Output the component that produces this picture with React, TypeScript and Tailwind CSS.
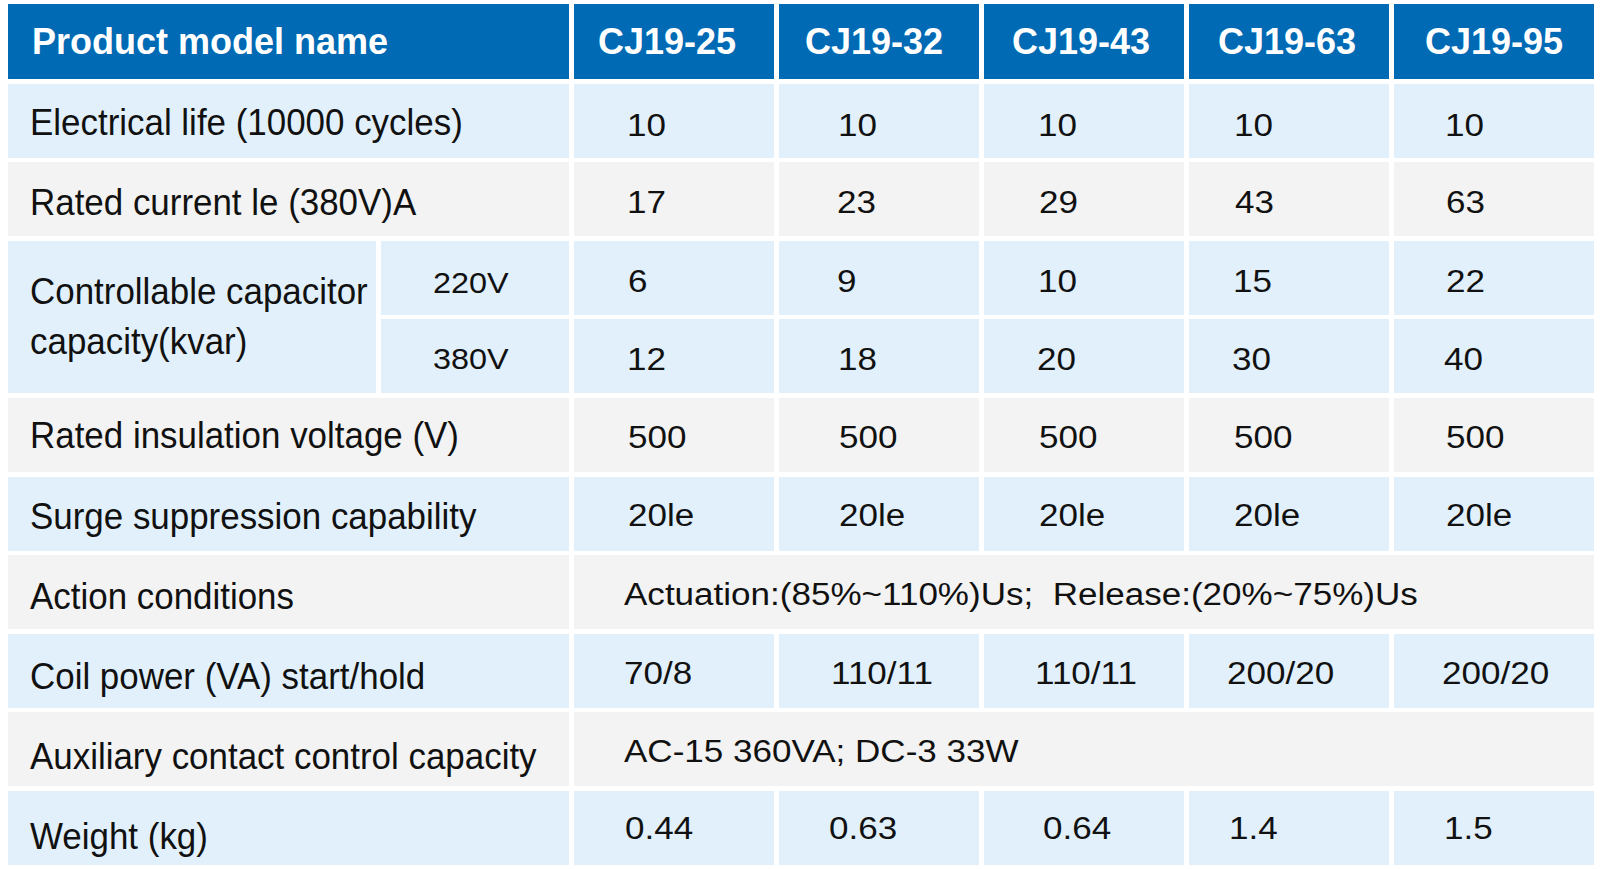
import type { ReactNode } from 'react';

const BLUE = 'bg-[#e1f0fa]';
const GRAY = 'bg-[#f3f3f3]';

function Head({ children, span = '', left = false, dx = '' }: { children: ReactNode; span?: string; left?: boolean; dx?: string }) {
  return (
    <div className={`flex items-center bg-[#006ab5] ${left ? 'justify-start pl-[24px]' : 'justify-center'} ${span}`}>
      <span className={`text-[36px] font-bold text-white ${dx}`}>{children}</span>
    </div>
  );
}

function Label({ children, tone, dy = '' }: { children: ReactNode; tone: string; dy?: string }) {
  return (
    <div className={`col-span-2 flex items-center pl-[22px] ${tone}`}>
      <span className={`inline-block origin-left scale-x-[0.97] whitespace-nowrap text-[36px] text-[#111] ${dy}`}>{children}</span>
    </div>
  );
}

function Value({ children, tone, pad, dy = '', span = '' }: { children: ReactNode; tone: string; pad: string; dy?: string; span?: string }) {
  return (
    <div className={`flex items-center ${tone} ${pad} ${span}`}>
      <span className={`inline-block origin-left scale-x-[1.13] whitespace-pre text-[31px] text-[#111] ${dy}`}>{children}</span>
    </div>
  );
}

export default function App() {
  return (
    <div className="min-h-screen bg-white font-['Liberation_Sans',Arial,sans-serif]">
      <div className="grid grid-cols-[368px_188px_repeat(5,200px)] grid-rows-[75px_repeat(10,74px)] gap-x-[5px] gap-y-[4.6px] pl-[8px] pt-[4px]">
        {/* header */}
        <Head span="col-span-2" left>Product model name</Head>
        <Head dx="-translate-x-[7px]">CJ19-25</Head>
        <Head dx="-translate-x-[5px]">CJ19-32</Head>
        <Head dx="-translate-x-[3px]">CJ19-43</Head>
        <Head dx="-translate-x-[2px]">CJ19-63</Head>
        <Head>CJ19-95</Head>

        {/* electrical life */}
        <Label tone={BLUE} dy="translate-y-[1.5px]">Electrical life (10000 cycles)</Label>
        <Value tone={BLUE} pad="pl-[53px]" dy="translate-y-[5.5px]">10</Value>
        <Value tone={BLUE} pad="pl-[59px]" dy="translate-y-[5.5px]">10</Value>
        <Value tone={BLUE} pad="pl-[54px]" dy="translate-y-[5.5px]">10</Value>
        <Value tone={BLUE} pad="pl-[45px]" dy="translate-y-[5.5px]">10</Value>
        <Value tone={BLUE} pad="pl-[51px]" dy="translate-y-[5.5px]">10</Value>

        {/* rated current */}
        <Label tone={GRAY} dy="translate-y-[4px]">Rated current le (380V)A</Label>
        <Value tone={GRAY} pad="pl-[53px]" dy="translate-y-[4px]">17</Value>
        <Value tone={GRAY} pad="pl-[58px]" dy="translate-y-[4px]">23</Value>
        <Value tone={GRAY} pad="pl-[55px]" dy="translate-y-[4px]">29</Value>
        <Value tone={GRAY} pad="pl-[46px]" dy="translate-y-[4px]">43</Value>
        <Value tone={GRAY} pad="pl-[52px]" dy="translate-y-[4px]">63</Value>

        {/* capacitor capacity, two sub rows */}
        <div className={`row-span-2 flex items-center pl-[22px] ${BLUE}`}>
          <span className="inline-block origin-left scale-x-[0.97] whitespace-nowrap text-[36px] leading-[50px] text-[#111]">
            Controllable capacitor
            <br />
            capacity(kvar)
          </span>
        </div>
        <div className={`flex items-center pl-[52px] ${BLUE}`}>
          <span className="inline-block origin-left translate-y-[5px] scale-x-[1.08] text-[30px] text-[#111]">220V</span>
        </div>
        <Value tone={BLUE} pad="pl-[54px]" dy="translate-y-[3.5px]">6</Value>
        <Value tone={BLUE} pad="pl-[58px]" dy="translate-y-[3.5px]">9</Value>
        <Value tone={BLUE} pad="pl-[54px]" dy="translate-y-[3.5px]">10</Value>
        <Value tone={BLUE} pad="pl-[44px]" dy="translate-y-[3.5px]">15</Value>
        <Value tone={BLUE} pad="pl-[52px]" dy="translate-y-[3.5px]">22</Value>

        <div className={`flex items-center pl-[52px] ${BLUE}`}>
          <span className="inline-block origin-left translate-y-[2px] scale-x-[1.08] text-[30px] text-[#111]">380V</span>
        </div>
        <Value tone={BLUE} pad="pl-[53px]" dy="translate-y-[4px]">12</Value>
        <Value tone={BLUE} pad="pl-[59px]" dy="translate-y-[4px]">18</Value>
        <Value tone={BLUE} pad="pl-[53px]" dy="translate-y-[4px]">20</Value>
        <Value tone={BLUE} pad="pl-[43px]" dy="translate-y-[4px]">30</Value>
        <Value tone={BLUE} pad="pl-[50px]" dy="translate-y-[4px]">40</Value>

        {/* insulation voltage */}
        <Label tone={GRAY} dy="translate-y-[1px]">Rated insulation voltage (V)</Label>
        <Value tone={GRAY} pad="pl-[54px]" dy="translate-y-[3px]">500</Value>
        <Value tone={GRAY} pad="pl-[60px]" dy="translate-y-[3px]">500</Value>
        <Value tone={GRAY} pad="pl-[55px]" dy="translate-y-[3px]">500</Value>
        <Value tone={GRAY} pad="pl-[45px]" dy="translate-y-[3px]">500</Value>
        <Value tone={GRAY} pad="pl-[52px]" dy="translate-y-[3px]">500</Value>

        {/* surge */}
        <Label tone={BLUE} dy="translate-y-[3px]">Surge suppression capability</Label>
        <Value tone={BLUE} pad="pl-[54px]" dy="translate-y-[3px]">20le</Value>
        <Value tone={BLUE} pad="pl-[60px]" dy="translate-y-[3px]">20le</Value>
        <Value tone={BLUE} pad="pl-[55px]" dy="translate-y-[3px]">20le</Value>
        <Value tone={BLUE} pad="pl-[45px]" dy="translate-y-[3px]">20le</Value>
        <Value tone={BLUE} pad="pl-[52px]" dy="translate-y-[3px]">20le</Value>

        {/* action conditions */}
        <Label tone={GRAY} dy="translate-y-[4.5px]">Action conditions</Label>
        <Value tone={GRAY} pad="pl-[50px]" dy="translate-y-[2.5px]" span="col-span-5">
          {'Actuation:(85%~110%)Us;  Release:(20%~75%)Us'}
        </Value>

        {/* coil power */}
        <Label tone={BLUE} dy="translate-y-[5.5px]">Coil power (VA) start/hold</Label>
        <Value tone={BLUE} pad="pl-[50px]" dy="translate-y-[2.5px]">70/8</Value>
        <Value tone={BLUE} pad="pl-[52px]" dy="translate-y-[2.5px]">110/11</Value>
        <Value tone={BLUE} pad="pl-[51px]" dy="translate-y-[2.5px]">110/11</Value>
        <Value tone={BLUE} pad="pl-[38px]" dy="translate-y-[2.5px]">200/20</Value>
        <Value tone={BLUE} pad="pl-[48px]" dy="translate-y-[2.5px]">200/20</Value>

        {/* auxiliary contact */}
        <Label tone={GRAY} dy="translate-y-[7.5px]">Auxiliary contact control capacity</Label>
        <Value tone={GRAY} pad="pl-[50px]" dy="translate-y-[3px]" span="col-span-5">
          AC-15 360VA; DC-3 33W
        </Value>

        {/* weight */}
        <Label tone={BLUE} dy="translate-y-[9px]">Weight (kg)</Label>
        <Value tone={BLUE} pad="pl-[51px]" dy="translate-y-[1px]">0.44</Value>
        <Value tone={BLUE} pad="pl-[50px]" dy="translate-y-[1px]">0.63</Value>
        <Value tone={BLUE} pad="pl-[59px]" dy="translate-y-[1px]">0.64</Value>
        <Value tone={BLUE} pad="pl-[40px]" dy="translate-y-[1px]">1.4</Value>
        <Value tone={BLUE} pad="pl-[50px]" dy="translate-y-[1px]">1.5</Value>
      </div>
    </div>
  );
}
